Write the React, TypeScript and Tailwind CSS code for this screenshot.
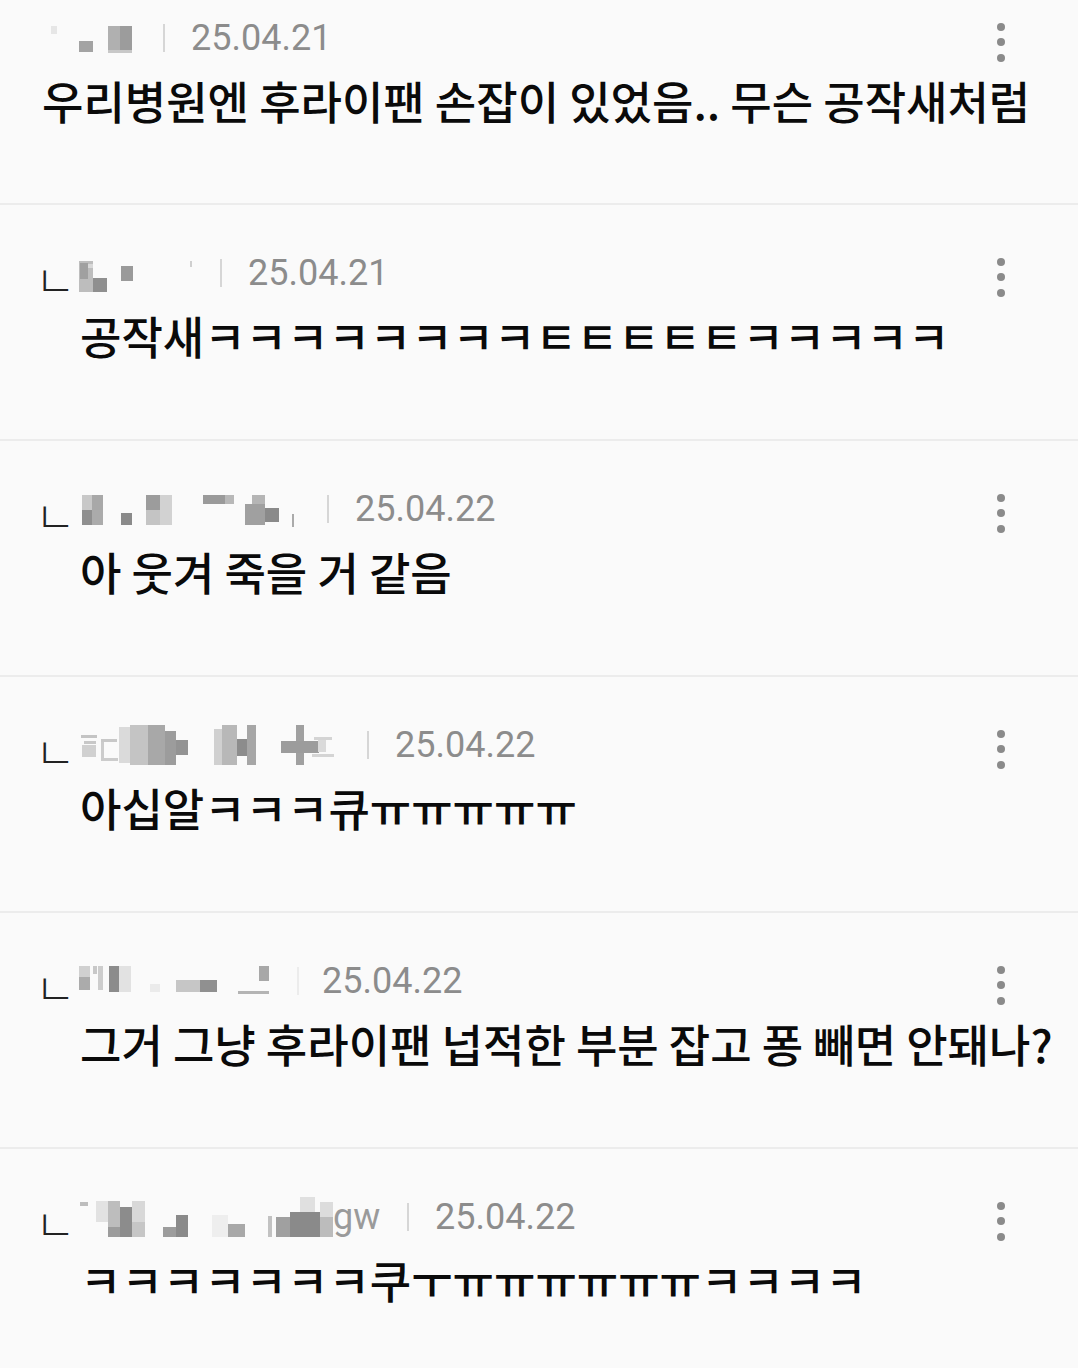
import React from "react";

type Rc = [number, number, number, number, string];

type Row = {
  reply: boolean;
  date: string;
  text: string;
  headerTop: number;
  nameStart: number;
  nameEnd: number;
  sep: number;
  sepColor: string;
  dateGap: number;
  extra?: string;
  rects: Rc[];
};

const rows: Row[] = [
  {
    reply: false,
    date: "25.04.21",
    text: "우리병원엔 후라이팬 손잡이 있었음.. 무슨 공작새처럼",
    headerTop: 18,
    nameStart: 42,
    nameEnd: 135,
    sep: 163,
    sepColor: "#d6d6d6",
    dateGap: 26,
    rects: [
      [51, 26, 6, 8, "#e6e6e6"],
      [79, 41, 14, 11, "#a3a3a3"],
      [108, 26, 12, 24, "#b0b0b0"],
      [120, 26, 12, 24, "#9c9c9c"],
      [108, 50, 24, 3, "#c8c8c8"],
    ],
  },
  {
    reply: true,
    date: "25.04.21",
    text: "공작새ㅋㅋㅋㅋㅋㅋㅋㅋㅌㅌㅌㅌㅌㅋㅋㅋㅋㅋ",
    headerTop: 253,
    nameStart: 70,
    nameEnd: 192,
    sep: 220,
    sepColor: "#d6d6d6",
    dateGap: 26,
    rects: [
      [79, 261, 14, 31, "#bdbdbd"],
      [80, 263, 8, 16, "#a0a0a0"],
      [88, 264, 5, 4, "#d8d8d8"],
      [93, 278, 14, 14, "#8f8f8f"],
      [121, 266, 12, 15, "#9a9a9a"],
      [190, 261, 2, 6, "#cfcfcf"],
    ],
  },
  {
    reply: true,
    date: "25.04.22",
    text: "아 웃겨 죽을 거 같음",
    headerTop: 489,
    nameStart: 70,
    nameEnd: 299,
    sep: 327,
    sepColor: "#d6d6d6",
    dateGap: 26,
    rects: [
      [82, 495, 10, 15, "#c8c8c8"],
      [92, 495, 11, 15, "#a8a8a8"],
      [82, 510, 10, 15, "#8f8f8f"],
      [92, 510, 11, 15, "#ababab"],
      [121, 513, 11, 12, "#8a8a8a"],
      [146, 495, 14, 15, "#9c9c9c"],
      [146, 510, 14, 15, "#c4c4c4"],
      [160, 495, 12, 30, "#d2d2d2"],
      [203, 495, 22, 9, "#9a9a9a"],
      [225, 495, 9, 9, "#b8b8b8"],
      [252, 495, 13, 9, "#b5b5b5"],
      [245, 504, 20, 21, "#a0a0a0"],
      [265, 508, 14, 14, "#8a8a8a"],
      [292, 514, 2, 13, "#aaaaaa"],
    ],
  },
  {
    reply: true,
    date: "25.04.22",
    text: "아십알ㅋㅋㅋ큐ㅠㅠㅠㅠㅠ",
    headerTop: 724,
    nameStart: 70,
    nameEnd: 339,
    sep: 367,
    sepColor: "#d6d6d6",
    dateGap: 26,
    rects: [
      [81, 734, 16, 3, "#c4c4c4"],
      [84, 740, 12, 3, "#c8c8c8"],
      [82, 744, 14, 12, "#d0d0d0"],
      [101, 738, 16, 3, "#c8c8c8"],
      [101, 741, 3, 18, "#cccccc"],
      [101, 757, 17, 3, "#cccccc"],
      [119, 726, 11, 36, "#dadada"],
      [130, 724, 18, 40, "#c4c4c4"],
      [148, 724, 17, 40, "#a8a8a8"],
      [165, 730, 11, 36, "#9c9c9c"],
      [176, 739, 12, 15, "#939393"],
      [214, 728, 8, 40, "#d0d0d0"],
      [222, 724, 15, 44, "#b8b8b8"],
      [237, 738, 10, 17, "#8c8c8c"],
      [247, 724, 9, 44, "#a6a6a6"],
      [296, 724, 8, 46, "#a0a0a0"],
      [281, 740, 38, 12, "#9c9c9c"],
      [314, 736, 18, 3, "#d4d4d4"],
      [318, 739, 8, 12, "#dadada"],
      [312, 753, 22, 3, "#d4d4d4"],
    ],
  },
  {
    reply: true,
    date: "25.04.22",
    text: "그거 그냥 후라이팬 넙적한 부분 잡고 퐁 빼면 안돼나?",
    headerTop: 959,
    nameStart: 70,
    nameEnd: 269,
    sep: 297,
    sepColor: "#ececec",
    dateGap: 23,
    rects: [
      [79, 964, 11, 11, "#d0d0d0"],
      [79, 975, 11, 13, "#ababab"],
      [93, 964, 4, 8, "#c8c8c8"],
      [98, 964, 5, 24, "#cdcdcd"],
      [109, 964, 10, 26, "#8c8c8c"],
      [119, 964, 12, 26, "#e2e2e2"],
      [150, 982, 10, 8, "#ebebeb"],
      [176, 978, 24, 12, "#c6c6c6"],
      [200, 978, 17, 12, "#909090"],
      [259, 964, 10, 15, "#a8a8a8"],
      [238, 989, 31, 3, "#b4b4b4"],
    ],
  },
  {
    reply: true,
    date: "25.04.22",
    text: "ㅋㅋㅋㅋㅋㅋㅋ쿠ㅜㅠㅠㅠㅠㅠㅠㅋㅋㅋㅋ",
    headerTop: 1195,
    nameStart: 70,
    nameEnd: 333,
    sep: 407,
    sepColor: "#d6d6d6",
    dateGap: 26,
    extra: "gw",
    rects: [
      [80, 1200, 8, 4, "#bdbdbd"],
      [96, 1199, 12, 21, "#e2e2e2"],
      [108, 1199, 12, 26, "#bdbdbd"],
      [108, 1225, 12, 14, "#9c9c9c"],
      [120, 1205, 12, 34, "#8c8c8c"],
      [132, 1199, 13, 21, "#d8d8d8"],
      [132, 1220, 13, 19, "#c6c6c6"],
      [163, 1225, 13, 14, "#9c9c9c"],
      [176, 1213, 12, 26, "#8a8a8a"],
      [212, 1213, 16, 24, "#eeeeee"],
      [228, 1222, 17, 15, "#a8a8a8"],
      [268, 1214, 4, 26, "#c2c2c2"],
      [276, 1215, 14, 22, "#a0a0a0"],
      [290, 1210, 30, 27, "#8a8a8a"],
      [300, 1195, 15, 15, "#e0e0e0"],
      [320, 1200, 13, 15, "#dcdcdc"],
      [320, 1215, 13, 22, "#bcbcbc"],
    ],
  },
];

function Kebab() {
  return (
    <div className="ml-auto mr-[73px] flex flex-col gap-[7.5px] pt-[8px]">
      <div className="h-[8px] w-[8px] rounded-full bg-[#8a8a8a]" />
      <div className="h-[8px] w-[8px] rounded-full bg-[#8a8a8a]" />
      <div className="h-[8px] w-[8px] rounded-full bg-[#8a8a8a]" />
    </div>
  );
}

function Comment({ row, first, last }: { row: Row; first: boolean; last: boolean }) {
  const w = row.nameEnd - row.nameStart;
  const nameRight = row.extra ? row.nameEnd + 47 : row.nameEnd;
  const sepMargin = row.sep - nameRight;
  return (
    <div
      className={
        "shrink-0 " +
        (first ? "h-[205px] pt-[18px] " : last ? "flex-1 pt-[48px] " : "h-[236px] pt-[48px] ") +
        (last ? "" : "border-b-2 border-[#ececec]")
      }
    >
      <div className="flex h-[40px] items-center pl-[42px]">
        {row.reply && (
          <span
            className="ml-[-7px] w-[35px] shrink-0 pt-[10px] text-[44px] font-light leading-[46px] text-[#222222]"
            style={{ fontFamily: '"Noto Sans CJK KR", sans-serif' }}
          >
            ㄴ
          </span>
        )}
        <svg
          width={w}
          height={40}
          viewBox={`${row.nameStart} ${row.headerTop} ${w} 40`}
          className="shrink-0"
        >
          {row.rects.map((r, i) => (
            <rect key={i} x={r[0]} y={r[1]} width={r[2]} height={r[3]} fill={r[4]} />
          ))}
        </svg>
        {row.extra && (
          <span
            className="w-[47px] shrink-0 text-[36px] leading-[40px] text-[#9a9a9a]"
            style={{ fontFamily: "Roboto, sans-serif" }}
          >
            {row.extra}
          </span>
        )}
        <div
          className="h-[28px] w-[2px] shrink-0"
          style={{ marginLeft: sepMargin, backgroundColor: row.sepColor }}
        />
        <span
          className="text-[36px] leading-[40px] text-[#8c8c8c]"
          style={{ fontFamily: "Roboto, sans-serif", marginLeft: row.dateGap }}
        >
          {row.date}
        </span>
        <Kebab />
      </div>
      <div
        className={
          "mt-[18px] whitespace-nowrap text-[45px] font-medium leading-[50px] text-[#0a0a0a] " +
          (row.reply ? "pl-[80px]" : "pl-[42px]")
        }
        style={{ fontFamily: '"Noto Sans CJK KR", "Noto Sans", sans-serif' }}
      >
        {row.text}
      </div>
    </div>
  );
}

export default function App() {
  return (
    <div className="flex h-[1368px] w-[1078px] flex-col overflow-hidden bg-[#fafafa]">
      {rows.map((row, i) => (
        <Comment key={i} row={row} first={i === 0} last={i === rows.length - 1} />
      ))}
    </div>
  );
}
